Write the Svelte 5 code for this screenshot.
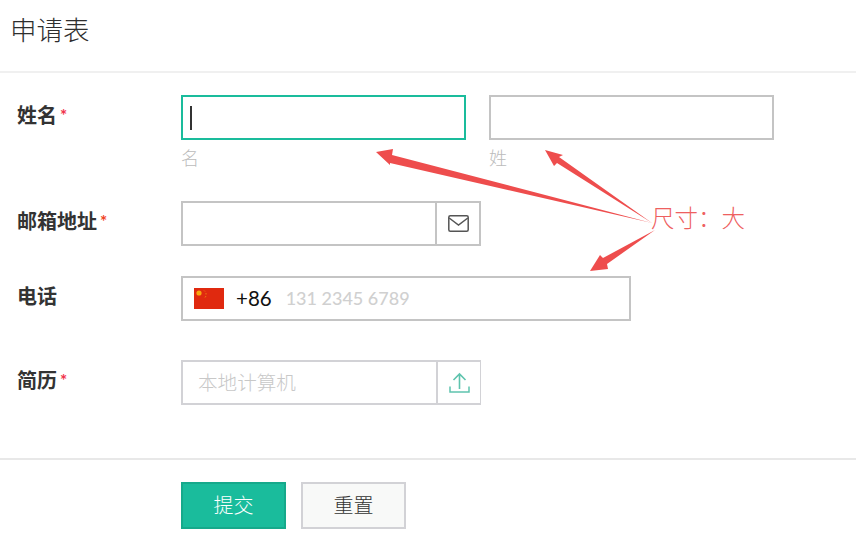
<script>
  const arrows = [
    "376,152 393,149 392,155 652,223 390,163 390,165",
    "545,150 563,155 559,157 652,223 557,163 554,166",
    "590,271 600,255 603,258 655,230 607,264 608,269"
  ];
</script>

<div class="page">
  <header class="head"><h1>申请表</h1></header>

  <form class="form">
    <div class="row row-name">
      <div class="label">姓名<span class="star">*</span></div>
      <div class="name-pair">
        <div class="col">
          <div class="box active"><span class="caret"></span></div>
          <div class="hint">名</div>
        </div>
        <div class="col">
          <div class="box"></div>
          <div class="hint">姓</div>
        </div>
      </div>
    </div>

    <div class="row row-email">
      <div class="label">邮箱地址<span class="star orange">*</span></div>
      <div class="box email">
        <div class="addon">
          <svg width="21" height="17" viewBox="0 0 21 17" fill="none" stroke="#555" stroke-width="1.5">
            <rect x="0.8" y="0.8" width="19.4" height="15.4" rx="1.5" />
            <path d="M1.2 3 L10.5 10 L19.8 3" />
          </svg>
        </div>
      </div>
    </div>

    <div class="row row-phone">
      <div class="label">电话</div>
      <div class="box phone">
        <svg class="flag" width="30" height="21" viewBox="0 0 30 21">
          <rect width="30" height="21" fill="#e0290f" />
          <circle cx="5" cy="5" r="2.6" fill="#f7a70f" />
          <path d="M10 2.5 L11 3.5 M12 5 L12 6.5 M12 8 L11 9.5" stroke="#ee7a10" stroke-width="1" />
        </svg>
        <span class="code">+86</span>
        <span class="ph-num">131 2345 6789</span>
      </div>
    </div>

    <div class="row row-file">
      <div class="label">简历<span class="star">*</span></div>
      <div class="file">
        <div class="file-text">本地计算机</div>
        <div class="file-btn">
          <svg width="21" height="22" viewBox="0 0 21 22" fill="none" stroke="#5fc4ae" stroke-width="1.6">
            <path d="M10.5 17 V2 M4.5 8 L10.5 2 L16.5 8" />
            <path d="M1 14.5 V20 H20 V14.5" stroke-width="1.5" />
          </svg>
        </div>
      </div>
    </div>

    <div class="actions">
      <button type="button" class="btn primary">提交</button>
      <button type="button" class="btn ghost">重置</button>
    </div>
  </form>

  <svg class="arrows" width="856" height="557" viewBox="0 0 856 557">
    {#each arrows as points}
      <polygon {points} fill="#ee4d4d" />
    {/each}
  </svg>
  <div class="note">尺寸：大</div>
</div>

<style>
  :global(body) {
    margin: 0;
    background: #fff;
  }
  .page {
    position: relative;
    width: 856px;
    height: 557px;
    overflow: hidden;
    font-family: Lato, "Noto Sans CJK SC", sans-serif;
    color: #333;
  }
  .head {
    height: 59px;
    padding: 12px 0 0 10px;
    border-bottom: 2px solid #f0f0f0;
  }
  h1 {
    margin: 0;
    font-size: 26.5px;
    line-height: 36px;
    font-weight: 300;
    color: #2e2e2e;
  }
  .form {
    padding-top: 22px;
  }
  .row {
    display: flex;
    padding-left: 17px;
  }
  .label {
    width: 164px;
    flex: none;
    font-size: 20px;
    font-weight: 700;
    line-height: 28px;
    padding-top: 6px;
    color: #333;
  }
  .star {
    color: #f0324b;
    font-size: 17px;
    font-weight: 700;
    margin-left: 3px;
    vertical-align: 1px;
  }
  .star.orange {
    color: #f0431e;
  }
  .name-pair {
    display: flex;
    gap: 23px;
  }
  .col {
    width: 285px;
  }
  .box {
    box-sizing: border-box;
    height: 45px;
    border: 2px solid #c4c4c4;
    background: #fff;
  }
  .box.active {
    border-color: #1abc9c;
    display: flex;
    align-items: center;
    padding-left: 7px;
  }
  .caret {
    width: 2px;
    height: 24px;
    background: #333;
  }
  .hint {
    font-size: 18px;
    line-height: 24px;
    margin-top: 6px;
    color: #bbb;
    font-weight: 300;
  }
  .row-email {
    margin-top: 31px;
  }
  .email {
    width: 300px;
    display: flex;
    justify-content: flex-end;
  }
  .addon {
    width: 42px;
    border-left: 2px solid #c4c4c4;
    display: flex;
    align-items: center;
    justify-content: center;
  }
  .row-phone {
    margin-top: 30px;
  }
  .phone {
    width: 450px;
    display: flex;
    align-items: center;
    padding-left: 11px;
  }
  .flag {
    flex: none;
  }
  .code {
    margin-left: 12px;
    margin-top: -2px;
    font-size: 20.5px;
    color: #111;
  }
  .ph-num {
    margin-left: 14px;
    margin-top: -2px;
    font-size: 18px;
    font-weight: 500;
    color: #d0d0d0;
  }
  .row-file {
    margin-top: 39px;
  }
  .file {
    width: 300px;
    height: 45px;
    box-sizing: border-box;
    border: 2px solid #d2d2d6;
    border-right: 0;
    display: flex;
  }
  .file-text {
    flex: 1;
    padding-left: 15px;
    font-size: 19.6px;
    line-height: 41px;
    font-weight: 300;
    color: #c8c8c8;
  }
  .file-btn {
    width: 42px;
    flex: none;
    border-left: 2px solid #d2d2d6;
    border-right: 1px solid #d2d2d6;
    display: flex;
    align-items: center;
    justify-content: center;
  }
  .actions {
    margin-top: 53px;
    border-top: 2px solid #e8e8e8;
    padding: 22px 0 0 181px;
    display: flex;
    gap: 15px;
  }
  .btn {
    width: 105px;
    height: 47px;
    box-sizing: border-box;
    font-family: inherit;
    font-size: 20px;
    font-weight: 300;
    padding: 0 0 3px;
  }
  .primary {
    background: #1abc9c;
    border: 2px solid #16a98b;
    color: #fff;
  }
  .ghost {
    background: #f8f9f8;
    border: 2px solid #d2d2d6;
    color: #333;
  }
  .arrows {
    position: absolute;
    left: 0;
    top: 0;
    pointer-events: none;
  }
  .note {
    position: absolute;
    left: 651px;
    top: 202px;
    font-size: 23.5px;
    line-height: 32px;
    font-weight: 300;
    color: #ee6060;
    white-space: nowrap;
  }
</style>
